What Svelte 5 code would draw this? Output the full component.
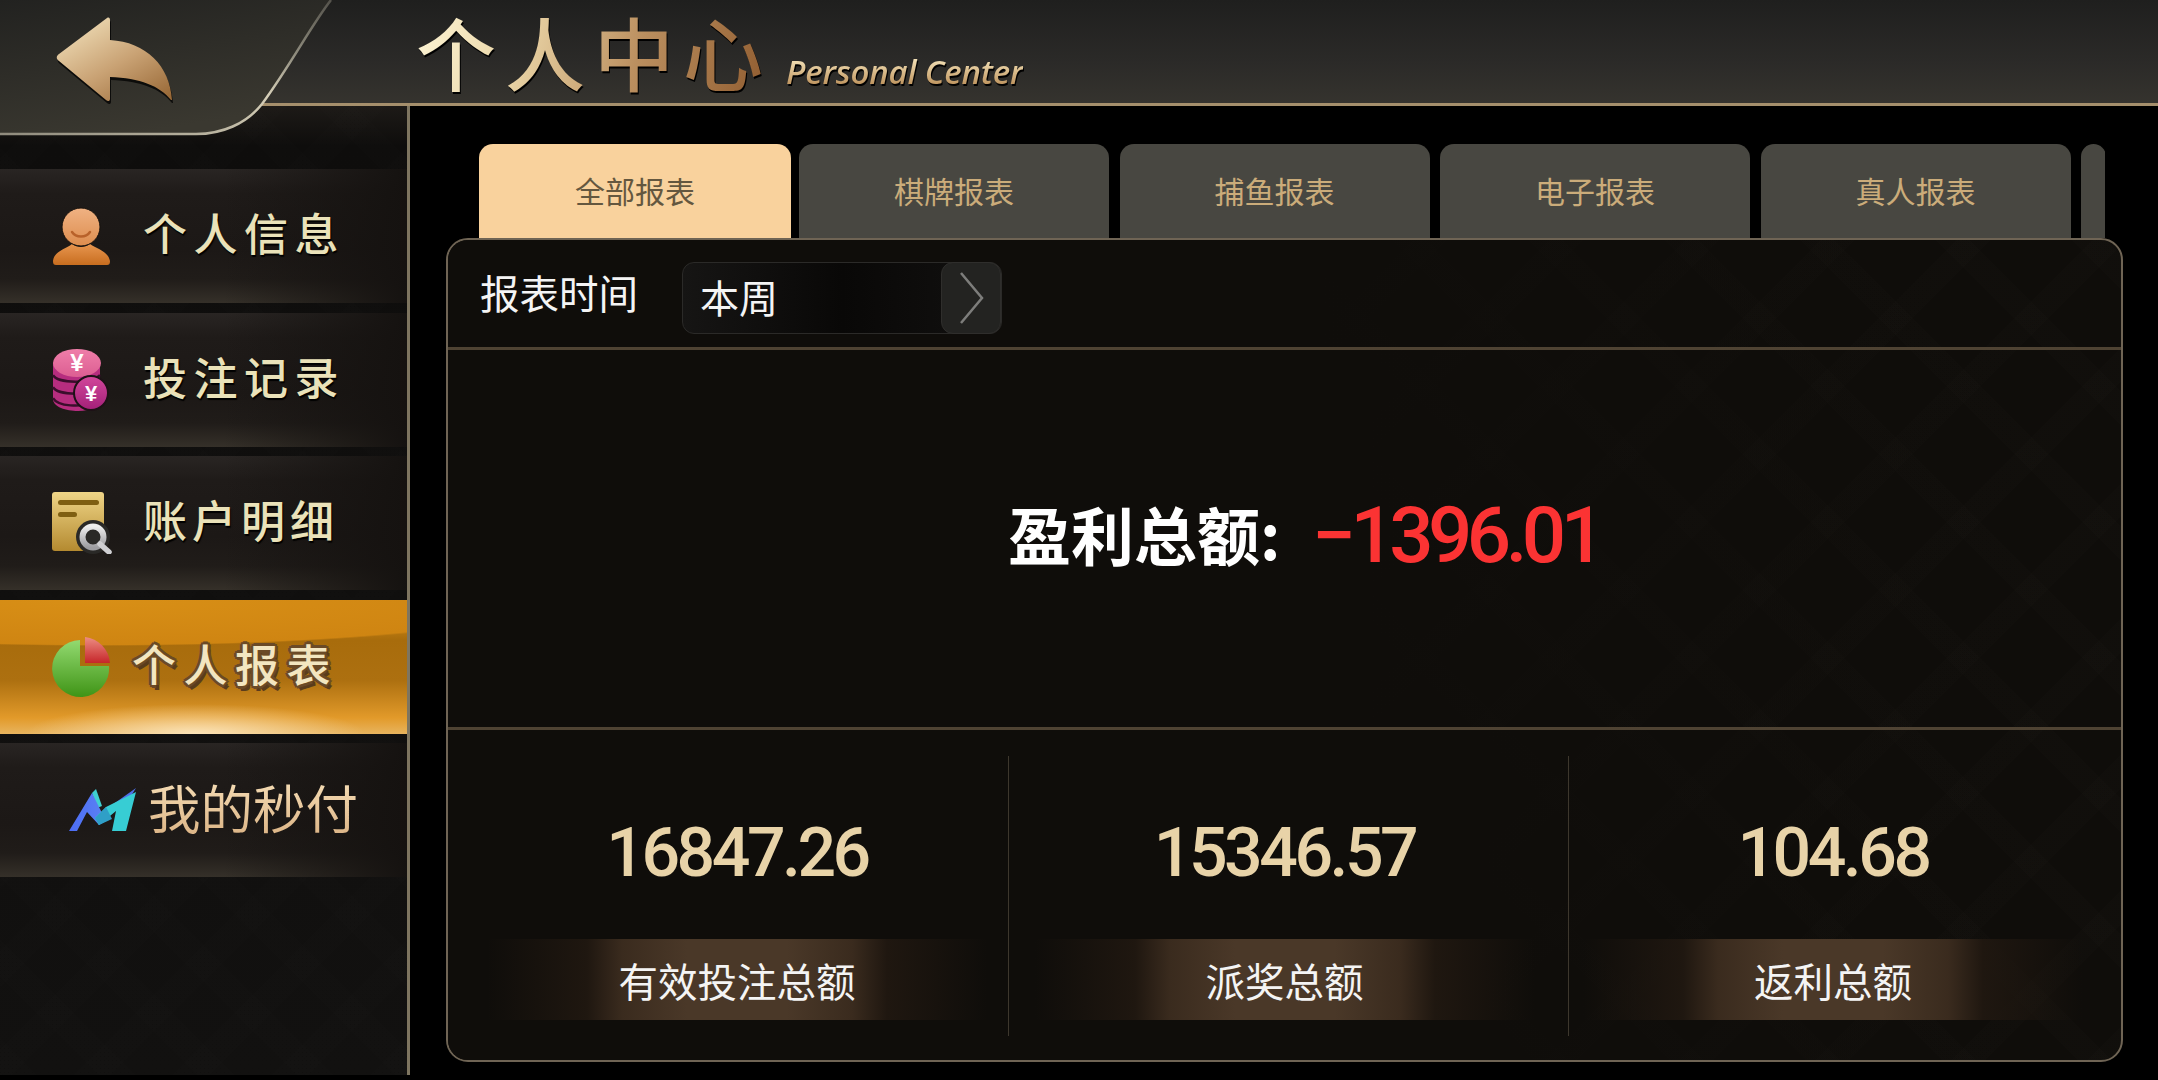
<script>
  const nav = [
    { key: 'person', label: '个人信息', cls: '' },
    { key: 'coins', label: '投注记录', cls: '' },
    { key: 'doc', label: '账户明细', cls: 'tight' },
    { key: 'pie', label: '个人报表', cls: 'active' },
    { key: 'logo', label: '我的秒付', cls: 'pay' }
  ];
  const tabs = ['全部报表', '棋牌报表', '捕鱼报表', '电子报表', '真人报表', ''];
  const stats = [
    { value: '16847.26', label: '有效投注总额' },
    { value: '15346.57', label: '派奖总额' },
    { value: '104.68', label: '返利总额' }
  ];
</script>

<div class="screen">
  <header class="top">
    <svg class="back" width="345" height="140" viewBox="0 0 345 140" aria-label="返回">
      <defs>
        <linearGradient id="backBg" x1="0" y1="0" x2="0.4" y2="1">
          <stop offset="0" stop-color="#222220" />
          <stop offset="1" stop-color="#3a3830" />
        </linearGradient>
        <linearGradient id="backLine" x1="0" y1="1" x2="1" y2="0">
          <stop offset="0" stop-color="#8f8b7d" />
          <stop offset="0.55" stop-color="#d6cfb8" />
          <stop offset="0.75" stop-color="#8d8a7c" />
          <stop offset="1" stop-color="#55534c" />
        </linearGradient>
        <linearGradient id="arrowFill" x1="0.1" y1="0" x2="0.9" y2="1">
          <stop offset="0" stop-color="#f3e3bd" />
          <stop offset="0.55" stop-color="#c9a274" />
          <stop offset="1" stop-color="#9a6a38" />
        </linearGradient>
      </defs>
      <path d="M0 0H331C312 24 290 66 262 104C246 124 222 134 196 134H0Z" fill="url(#backBg)" />
      <path d="M331 0C312 24 290 66 262 104C246 124 222 134 196 134H0" fill="none" stroke="url(#backLine)" stroke-width="2.500" />
      <path d="M59 54L107 18C109 17 110 18 110 20V40C146 42 170 66 172 100L171 100C160 86 140 78 110 77V99C110 101 108 102 106 100L59 61C56 59 56 56 59 54Z" fill="#000" opacity=".75" transform="translate(1 3)" />
      <path d="M59 54L107 18C109 17 110 18 110 20V40C146 42 170 66 172 100L171 100C160 86 140 78 110 77V99C110 101 108 102 106 100L59 61C56 59 56 56 59 54Z" fill="url(#arrowFill)" />
    </svg>
    <h1 class="title">个人中心</h1>
    <span class="subtitle">Personal Center</span>
  </header>

  <div class="body">
    <nav class="side">
      {#each nav as item}
        <div class="item {item.cls}">
          <span class="icon">
            {#if item.key === 'person'}
              <svg width="58" height="58" viewBox="0 0 58 58">
                <defs>
                  <linearGradient id="pHead" x1="0" y1="0" x2="0" y2="1"><stop offset="0" stop-color="#f0b283" /><stop offset="1" stop-color="#dd8d4e" /></linearGradient>
                  <linearGradient id="pBody" x1="0" y1="0" x2="0" y2="1"><stop offset="0" stop-color="#e8964f" /><stop offset="1" stop-color="#c76d1f" /></linearGradient>
                </defs>
                <path d="M1 54C2 44 14 42 20 37C25 41 33 41 38 37C45 42 56 44 58 54C58 57 57 58 55 58H4C2 58 1 57 1 54Z" fill="url(#pBody)" />
                <circle cx="29" cy="20" r="19" fill="url(#pHead)" stroke="#17110c" stroke-width="1" />
                <path d="M20 25C24 31 34 31 38 25" fill="none" stroke="#b8622a" stroke-width="2.500" stroke-linecap="round" />
              </svg>
            {:else if item.key === 'coins'}
              <svg width="58" height="62" viewBox="0 0 58 62">
                <defs>
                  <linearGradient id="cTop" x1="0" y1="0" x2="0" y2="1"><stop offset="0" stop-color="#ef7ea9" /><stop offset="1" stop-color="#dc5e92" /></linearGradient>
                  <linearGradient id="cRound" x1="0" y1="0" x2="0" y2="1"><stop offset="0" stop-color="#d2479b" /><stop offset="1" stop-color="#a32078" /></linearGradient>
                </defs>
                <path d="M1 14V50C1 58 14 62 26 62C40 62 48 56 48 50V14Z" fill="#b62d7f" />
                <path d="M1 26C6 35 40 35 48 26M1 38C6 47 40 47 48 38M1 49C6 58 30 58 38 54" fill="none" stroke="#3a0e2c" stroke-width="2.500" />
                <ellipse cx="25" cy="14" rx="24" ry="14" fill="url(#cTop)" />
                <text x="25" y="22" class="yen big">¥</text>
                <circle cx="39" cy="44" r="17" fill="url(#cRound)" stroke="#1d1116" stroke-width="2" />
                <text x="39" y="52" class="yen">¥</text>
              </svg>
            {:else if item.key === 'doc'}
              <svg width="60" height="62" viewBox="0 0 60 62">
                <defs>
                  <linearGradient id="dBg" x1="0" y1="0" x2="0" y2="1"><stop offset="0" stop-color="#efd587" /><stop offset="1" stop-color="#b48a30" /></linearGradient>
                  <linearGradient id="dQ" x1="0" y1="0" x2="0" y2="1"><stop offset="0" stop-color="#eeeeee" /><stop offset="1" stop-color="#9c9ca0" /></linearGradient>
                </defs>
                <rect x="0" y="0" width="52" height="59" rx="3" fill="url(#dBg)" />
                <rect x="6" y="8" width="41" height="5" rx="2.500" fill="#7f5f12" />
                <rect x="6" y="20" width="19" height="5" rx="2.500" fill="#7f5f12" />
                <circle cx="41" cy="45" r="17" fill="#2a2927" />
                <circle cx="41" cy="45" r="10.500" fill="#2a2927" stroke="url(#dQ)" stroke-width="6" />
                <path d="M48 52L57 60" stroke="#cfcfd2" stroke-width="5.500" stroke-linecap="round" />
              </svg>
            {:else if item.key === 'pie'}
              <svg width="60" height="60" viewBox="0 0 60 60">
                <defs>
                  <linearGradient id="pieG" x1="0" y1="0" x2="0" y2="1"><stop offset="0" stop-color="#93da70" /><stop offset="1" stop-color="#3f9416" /></linearGradient>
                  <linearGradient id="pieR" x1="0" y1="0" x2="0" y2="1"><stop offset="0" stop-color="#ec8d82" /><stop offset="1" stop-color="#c6262a" /></linearGradient>
                </defs>
                <path d="M28 3V29H57A28.500 28.500 0 1 1 28 3Z" fill="url(#pieG)" />
                <path d="M33 0A28 28 0 0 1 58 26H33Z" fill="url(#pieR)" />
              </svg>
            {:else}
              <svg width="68" height="44" viewBox="0 0 68 44">
                <defs>
                  <linearGradient id="mBlue" x1="0" y1="0" x2="1" y2="0"><stop offset="0" stop-color="#4c6cf5" /><stop offset="1" stop-color="#5b82f2" /></linearGradient>
                </defs>
                <path d="M23 5L27 1L33 18L28 20Z" fill="#3fd0d2" />
                <path d="M43 17L67 0L62 8Z" fill="#4f6ee8" />
                <path d="M0 43L23 5L37 33L30 37L18 24L8 43Z" fill="url(#mBlue)" />
                <path d="M37 19L67 4L57 43H43L47 23L30 37L26 30Z" fill="#37cdd4" />
                <path d="M26 30L37 19L43 31L30 37Z" fill="#2f9fc7" />
              </svg>
            {/if}
          </span>
          <span class="label">{item.label}</span>
        </div>
      {/each}
    </nav>

    <main class="content">
      <div class="tabs">
        {#each tabs as t, i}
          <div class="tab" class:on={i === 0} class:cut={t === ''}>{t}</div>
        {/each}
      </div>
      <section class="panel">
        <div class="filter">
          <span class="filter-name">报表时间</span>
          <div class="select">
            <span class="select-value">本周</span>
            <span class="select-btn">
              <svg width="26" height="58" viewBox="0 0 26 58"><path d="M3 4L24 29L3 54" fill="none" stroke="#7d7d7b" stroke-width="2.500" /></svg>
            </span>
          </div>
        </div>
        <div class="profit">
          <span class="profit-name">盈利总额:</span>
          <span class="profit-value">−1396.01</span>
        </div>
        <div class="stats">
          {#each stats as s}
            <div class="stat">
              <div class="stat-value">{s.value}</div>
              <div class="stat-label">{s.label}</div>
            </div>
          {/each}
        </div>
      </section>
    </main>
  </div>
</div>

<style>
  :global(body) { margin: 0; background: #000; }
  .screen {
    width: 2158px;
    height: 1080px;
    background: #000;
    position: relative;
    overflow: hidden;
    font-family: "Noto Sans CJK SC", "Noto Sans", sans-serif;
    display: flex;
    flex-direction: column;
  }
  .top {
    height: 106px;
    box-sizing: border-box;
    padding-left: 416px;
    display: flex;
    align-items: flex-start;
    background: linear-gradient(180deg, #1f1f1e 0%, #2b2a28 60%, #35332e 100%);
    border-bottom: 3px solid #a58f6c;
    flex: none;
  }
  .back { position: absolute; left: 0; top: 0; z-index: 2; }
  .title {
    margin: 0;
    font-size: 80px;
    font-weight: 500;
    line-height: 100px;
    letter-spacing: 9px;
    background: linear-gradient(105deg, #fdf5d6 0%, #ecd8aa 28%, #bb8f5f 62%, #8e5a2e 100%);
    -webkit-background-clip: text;
    background-clip: text;
    color: transparent;
    filter: drop-shadow(1px 2px 0 #000);
  }
  .subtitle {
    margin-left: 14px;
    margin-top: 50px;
    font-family: "Open Sans", sans-serif;
    font-style: italic;
    font-weight: 600;
    font-size: 33px;
    line-height: 44px;
    letter-spacing: -0.2px;
    background: linear-gradient(180deg, #f4e2b8 20%, #b98c55 85%);
    -webkit-background-clip: text;
    background-clip: text;
    color: transparent;
    filter: drop-shadow(1px 2px 0 #000);
  }
  .body { display: flex; flex: 1; min-height: 0; }
  .side {
    width: 410px;
    height: 969px;
    box-sizing: border-box;
    padding-top: 63px;
    flex: none;
    display: flex;
    flex-direction: column;
    gap: 9.500px;
    border-right: 3px solid #7e7560;
    background:
      repeating-linear-gradient(45deg, rgba(255,255,255,.004) 0 26px, transparent 26px 70px),
      repeating-linear-gradient(-45deg, rgba(255,255,255,.004) 0 26px, transparent 26px 70px),
      linear-gradient(180deg, #1d1a17 0, #0e0d0c 40px, #121110 100%);
  }
  .item {
    height: 134px;
    flex: none;
    display: flex;
    align-items: center;
    padding-left: 52px;
    box-sizing: border-box;
    padding-bottom: 8px;
    background:
      linear-gradient(90deg, transparent 55%, #151210 100%),
      linear-gradient(180deg, #292523 0%, #1f1b19 18%, #1c1816 60%, #201c19 82%, #353029 100%);
  }
  .icon { width: 91px; flex: none; display: flex; align-items: center; }
  .item .icon { margin-top: 8px; }
  .label {
    font-size: 44px;
    line-height: 60px;
    letter-spacing: 6.500px;
    font-weight: 500;
    color: #eae2b9;
    text-shadow: 1px 2px 1px #000;
  }
  .item.tight .label { letter-spacing: 5px; }
  .item.active {
    background:
      radial-gradient(ellipse 170px 30px at 195px 100%, rgba(255,236,200,.85), transparent),
      radial-gradient(ellipse 450px 46px at 100px 0, #d88f16 0, #cf8512 97%, transparent 100%),
      linear-gradient(180deg, #e89d1f 0, #a86c0c 30%, #ad7010 60%, #e29a2a 88%, #e8b45e 100%);
  }
  .item.active .icon { width: 80px; margin-top: 8px; }
  .item.active .label {
    color: #f3e6c0;
    letter-spacing: 7.500px;
    text-shadow: -3px 0 0 #6b4a26, 3px 0 0 #6b4a26, 0 -3px 0 #6b4a26, 0 3px 0 #6b4a26, -2px -2px 0 #6b4a26, 2px -2px 0 #6b4a26, -2px 2px 0 #6b4a26, 2px 3px 0 #5a3c1c, 3px 5px 0 #5a3c1c;
  }
  .item.pay { padding-left: 69px; }
  .item.pay .icon { width: 79px; }
  .item.pay .label {
    font-size: 52.500px;
    letter-spacing: 0;
    font-weight: 400;
    background: linear-gradient(180deg, #f9e3bd 0%, #d9b081 100%);
    -webkit-background-clip: text;
    background-clip: text;
    color: transparent;
    text-shadow: none;
    line-height: 72px;
  }
  .yen {
    font-family: "Liberation Sans", sans-serif;
    font-size: 22px;
    font-weight: 700;
    fill: #fff;
    text-anchor: middle;
  }
  .yen.big { font-size: 24px; }

  .content { flex: 1; min-width: 0; padding: 38px 0 0 36px; }
  .tabs {
    display: flex;
    gap: 10.500px;
    padding-left: 33px;
    height: 94px;
    width: 1659px;
    box-sizing: border-box;
    overflow: hidden;
  }
  .tab {
    width: 310px;
    flex: none;
    box-sizing: border-box;
    border-radius: 14px 14px 0 0;
    background: #484741;
    color: #cbac7a;
    font-size: 30px;
    line-height: 92px;
    text-align: center;
    font-weight: 400;
  }
  .tab.on { background: #f9d29d; color: #64573f; width: 312px; margin-right: -2.500px; }
  .tab.cut { width: 25px; }
  .panel {
    width: 1677px;
    height: 824px;
    box-sizing: border-box;
    border: 2.500px solid #6f6454;
    border-radius: 22px;
    background:
      repeating-linear-gradient(45deg, rgba(255,240,220,.009) 0 24px, transparent 24px 96px),
      repeating-linear-gradient(-45deg, rgba(255,240,220,.009) 0 24px, transparent 24px 96px),
      #0f0d0a;
    display: flex;
    flex-direction: column;
    color: #fff;
    overflow: hidden;
  }
  .filter {
    height: 110px;
    flex: none;
    box-sizing: border-box;
    padding-left: 32px;
    display: flex;
    align-items: center;
    border-bottom: 3px solid #4f4333;
    background: linear-gradient(90deg, #0f0d0a 52%, transparent 90%);
  }
  .filter-name { font-size: 39.500px; width: 201px; line-height: 50px; margin-top: -4px; font-weight: 400; color: #f4f4f4; }
  .select {
    width: 320px;
    height: 72px;
    box-sizing: border-box;
    border: 1.500px solid #2b2a28;
    border-radius: 12px;
    background: linear-gradient(90deg, #161514, #090807 50%, #121110);
    display: flex;
    align-items: center;
    justify-content: space-between;
    margin-left: 1px;
    margin-top: 8px;
  }
  .select-value { margin-left: 17px; font-size: 39px; line-height: 50px; margin-top: -3px; font-weight: 400; color: #f4f4f4; }
  .select-btn {
    width: 60px;
    height: 72px;
    box-sizing: border-box;
    border: 1.500px solid #2f2e2c;
    border-radius: 12px;
    background: #232321;
    display: flex;
    align-items: center;
    justify-content: center;
  }
  .profit {
    height: 380px;
    flex: none;
    box-sizing: border-box;
    border-bottom: 3px solid #4f4333;
    display: flex;
    align-items: center;
    padding: 0 0 0 560px;
    background: linear-gradient(90deg, #0f0d0a 55%, transparent 95%);
  }
  .profit-name { font-size: 63px; font-weight: 700; line-height: 80px; color: #fff; width: 304px; margin-top: -11px; }
  .profit-value {
    font-family: Roboto, sans-serif;
    font-size: 78px;
    font-weight: 500;
    line-height: 80px;
    letter-spacing: -5.500px;
    color: #fb3333;
    margin-top: -6px;
  }
  .stats {
    flex: 1;
    display: grid;
    grid-template-columns: 560px 560px 1fr;
    padding-top: 26px;
    background: linear-gradient(90deg, #0f0d0a 62%, transparent 95%);
  }
  .stat {
    height: 280px;
    display: flex;
    flex-direction: column;
    align-items: center;
    border-left: 1.500px solid #3d372d;
  }
  .stat:first-child { border-left: 0; padding-left: 18px; }
  .stat:nth-child(2) { padding-right: 8px; }
  .stat:last-child { padding-right: 24px; }
  .stat-value {
    font-family: Roboto, sans-serif;
    font-size: 68px;
    font-weight: 500;
    letter-spacing: -3.500px;
    line-height: 70px;
    margin-top: 62px;
    color: #e8d3a8;
  }
  .stat-label {
    margin-top: 51px;
    width: 500px;
    height: 81px;
    line-height: 81px;
    text-align: center;
    font-size: 39.500px;
    font-weight: 400;
    color: #f4f4f4;
    background: linear-gradient(90deg, transparent 0%, #1f1710 20%, #3a2b1e 27%, #4a3828 40%, #4a3828 60%, #3a2b1e 73%, #1f1710 80%, transparent 100%);
  }
</style>
